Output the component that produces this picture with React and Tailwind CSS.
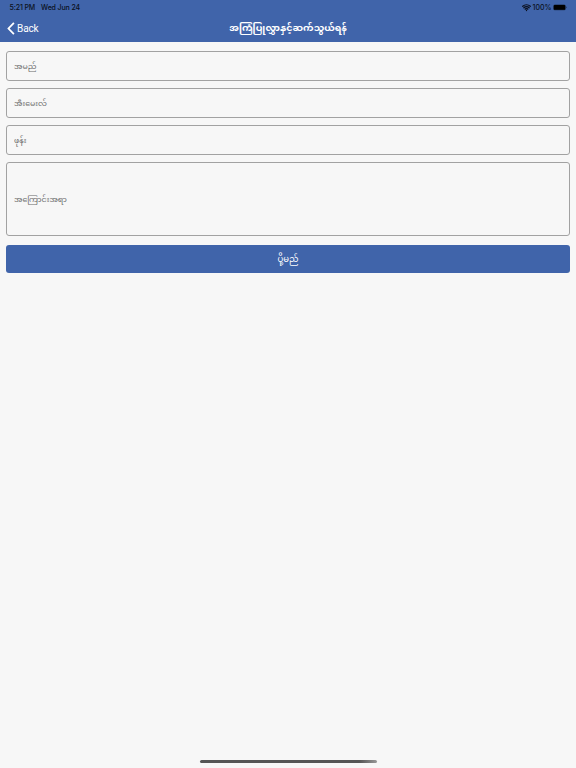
import { Wifi } from "lucide-react";

const fields = [
  { name: "name", placeholder: "အမည်", type: "text" },
  { name: "email", placeholder: "အီးမေးလ်", type: "email" },
  { name: "phone", placeholder: "ဖုန်း", type: "tel" },
];

const StatusBar = () => (
  <div className="flex h-3.5 items-center justify-between pr-[8.5px] pl-[9.5px] text-[7px] font-medium text-[#0b1120]">
    <div className="flex gap-[6px] pt-[2px] tracking-[-0.12px]">
      <span>5:21 PM</span>
      <span>Wed Jun 24</span>
    </div>
    <div className="flex items-center">
      <Wifi size={9} strokeWidth={3.5} className="mr-[1.5px]" />
      <span className="mr-[1px] pt-[2px]">100%</span>
      <svg width="15" height="7" viewBox="0 0 15 7">
        <rect x="0.3" y="0.5" width="12.4" height="5.8" rx="1.5" fill="#1f3357" />
        <rect x="0.8" y="1" width="11.4" height="4.8" rx="0.9" fill="#000" />
        <path d="M13.3 2.5c.9.3.9 1.5 0 1.8z" fill="#1f3357" />
      </svg>
    </div>
  </div>
);

const Header = () => (
  <header className="h-[42px] bg-[#4064aa]">
    <StatusBar />
    <div className="grid h-7 grid-cols-[1fr_auto_1fr] items-center text-white">
      <button type="button" className="flex items-center gap-[2px] pl-[7px] font-['Roboto',sans-serif] text-[10px] tracking-[-0.1px]">
        <svg width="8" height="13" viewBox="0 0 8 13" fill="none">
          <path d="M6.9 0.9 1.5 6.5l5.4 5.6" stroke="currentColor" strokeWidth="1.8" />
        </svg>
        Back
      </button>
      <h1 className="text-[9.5px] leading-5 font-bold whitespace-nowrap">
        အကြံပြုလွှာနှင့်ဆက်သွယ်ရန်
      </h1>
    </div>
  </header>
);

const inputStyle =
  "block w-full rounded-[3px] border border-[#a2a2a2] bg-transparent px-[7px] pb-px text-[7.9px] outline-none placeholder:text-[#6c6c6c]";

const App = () => {
  return (
    <div className="flex h-screen flex-col overflow-hidden bg-[#f7f7f7] font-['Inter','Noto_Sans_Myanmar','Noto_Sans',sans-serif]">
      <Header />
      <form className="flex flex-1 flex-col px-1.5 pt-[9px]" onSubmit={(e) => e.preventDefault()}>
        <div className="space-y-[7px]">
          {fields.map((field) => (
            <input
              key={field.name}
              name={field.name}
              type={field.type}
              placeholder={field.placeholder}
              className={`${inputStyle} h-[30px]`}
            />
          ))}
          <input
            name="message"
            placeholder="အကြောင်းအရာ"
            className={`${inputStyle} h-[74px]`}
          />
        </div>
        <button
          type="submit"
          className="mt-[9px] h-7 rounded-[3px] bg-[#4064aa] pt-px text-[8.5px] text-white"
        >
          ပို့မည်
        </button>
      </form>
      <div className="mb-[5px] h-[3px] w-[177px] self-center rounded-full bg-linear-to-r from-[#555] from-90% to-[#999]" />
    </div>
  );
};

export default App;
